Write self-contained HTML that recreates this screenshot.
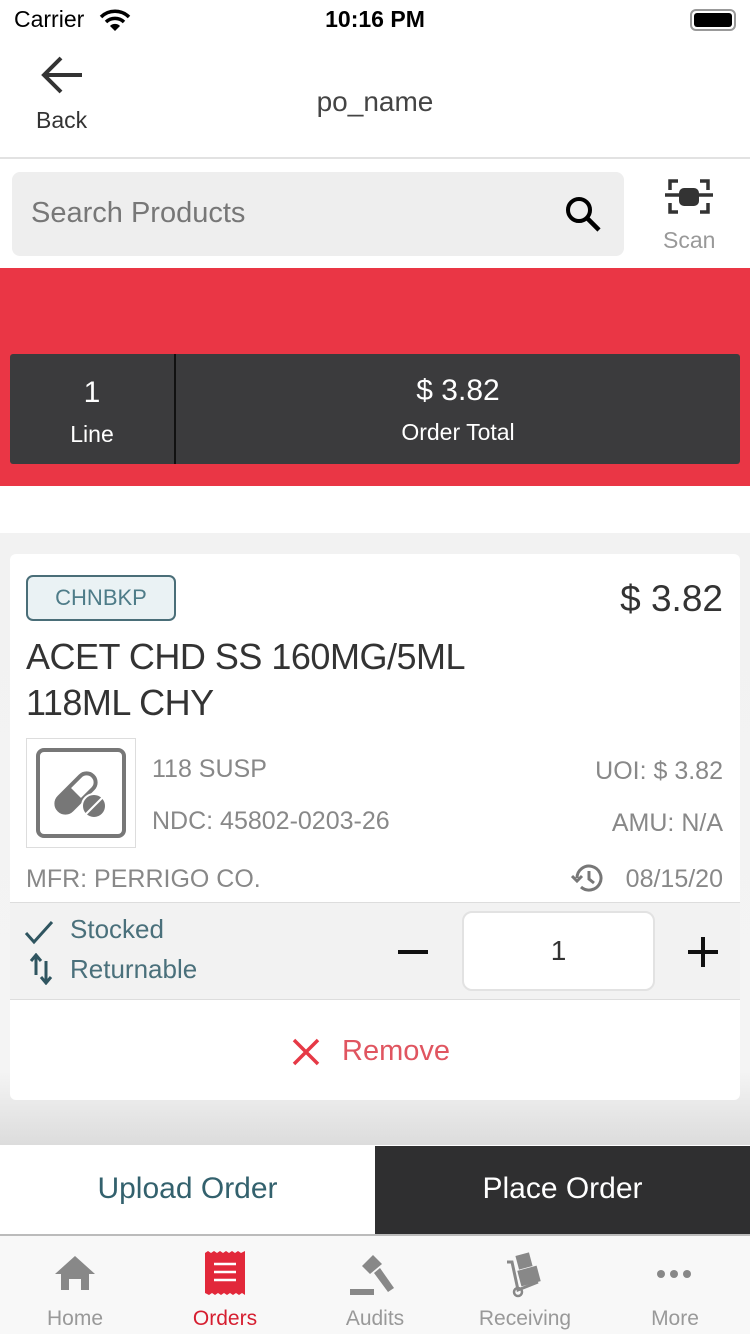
<!DOCTYPE html>
<html><head><meta charset="utf-8"><style>
*{margin:0;padding:0;box-sizing:border-box}
body{width:750px;height:1334px;position:relative;overflow:hidden;background:#fff;font-family:"Liberation Sans",sans-serif}
.a{position:absolute}
.c{white-space:nowrap}
</style></head><body>
<div class="a c" style="left:14px;top:6px;font-size:23px;color:#000">Carrier</div>
<svg class="a" style="left:98px;top:9px" width="34" height="22" viewBox="0 0 34 22"><path d="M3 8 A20 20 0 0 1 31 8" stroke="#000" stroke-width="3.5" fill="none"/><path d="M8 13 A13 13 0 0 1 26 13" stroke="#000" stroke-width="3.5" fill="none"/><path d="M17 22 L12 17 A7 7 0 0 1 22 17Z" fill="#000"/></svg>
<div class="a c" style="left:0;width:750px;text-align:center;top:6px;font-size:23px;font-weight:bold;color:#000">10:16 PM</div>
<div class="a" style="left:690px;top:9px;width:46px;height:22px;border:2px solid #999;border-radius:6px;padding:2px"><div style="background:#000;width:100%;height:100%;border-radius:3px"></div></div>

<svg class="a" style="left:40px;top:55px" width="44" height="40" viewBox="0 0 44 40"><path d="M42 20H4M21 3L4 20L21 37" stroke="#333" stroke-width="4" fill="none"/></svg>
<div class="a c" style="left:36px;top:107px;font-size:23px;color:#333">Back</div>
<div class="a c" style="left:0;width:750px;text-align:center;top:86px;font-size:28px;color:#444">po_name</div>
<div class="a" style="left:0;top:157px;width:750px;height:2px;background:#e2e2e2"></div>

<div class="a" style="left:12px;top:172px;width:612px;height:84px;background:#eeeeee;border-radius:8px"></div>
<div class="a c" style="left:31px;top:197px;font-size:29px;color:#777">Search Products</div>
<svg class="a" style="left:564px;top:195px" width="40" height="40" viewBox="0 0 40 40"><circle cx="15" cy="15" r="11" stroke="#000" stroke-width="4" fill="none"/><path d="M23 23L35 35" stroke="#000" stroke-width="4.5"/></svg>
<svg class="a" style="left:664px;top:176px" width="50" height="40" viewBox="0 0 50 40"><path d="M6 14V5H14M36 5H44V14M6 27V36H14M36 36H44V27" stroke="#333" stroke-width="3.5" fill="none"/><path d="M1 19H49" stroke="#333" stroke-width="3.5"/><rect x="15" y="12" width="20" height="18" rx="5" fill="#333"/></svg>
<div class="a c" style="left:663px;top:227px;font-size:23px;color:#999">Scan</div>

<div class="a" style="left:0;top:268px;width:750px;height:218px;background:#ea3645"></div>
<div class="a" style="left:10px;top:354px;width:730px;height:110px;background:#3b3b3d;border-radius:3px"></div>
<div class="a" style="left:174px;top:354px;width:2px;height:110px;background:#111"></div>
<div class="a c" style="left:10px;width:164px;text-align:center;top:376px;font-size:30px;color:#fff">1</div>
<div class="a c" style="left:10px;width:164px;text-align:center;top:421px;font-size:23px;color:#fff">Line</div>
<div class="a c" style="left:176px;width:564px;text-align:center;top:374px;font-size:30px;color:#fff">$ 3.82</div>
<div class="a c" style="left:176px;width:564px;text-align:center;top:419px;font-size:23px;color:#fff">Order Total</div>

<div class="a" style="left:0;top:533px;width:750px;height:612px;background:linear-gradient(180deg,#f2f2f2,#f4f4f4 88%,#dcdcdc)"></div>
<div class="a" style="left:10px;top:554px;width:730px;height:546px;background:#fff;border-radius:6px"></div>
<div class="a c" style="left:26px;top:575px;width:150px;height:46px;border:2px solid #4a6e78;border-radius:7px;background:#eaf2f4;color:#4e7c88;font-size:22px;text-align:center;line-height:42px">CHNBKP</div>
<div class="a c" style="right:27px;top:578px;font-size:37px;color:#333">$ 3.82</div>
<div class="a" style="left:26px;top:634px;font-size:36px;line-height:46px;color:#333;letter-spacing:-0.5px">ACET CHD SS 160MG/5ML<br>118ML CHY</div>
<div class="a" style="left:26px;top:738px;width:110px;height:110px;border:1px solid #ddd"></div>
<svg class="a" style="left:36px;top:748px" width="90" height="90" viewBox="0 0 90 90"><rect x="2" y="2" width="86" height="86" rx="6" stroke="#777" stroke-width="4" fill="none"/><g transform="rotate(-45 40 45)"><rect x="16" y="36" width="48" height="18" rx="9" stroke="#777" stroke-width="4" fill="none"/><path d="M25 36H40V54H25A9 9 0 0 1 25 36Z" fill="#777"/></g><circle cx="58" cy="58" r="12" fill="#777" stroke="#fff" stroke-width="2"/><path d="M50 66L66 50" stroke="#fff" stroke-width="2"/></svg>
<div class="a c" style="left:152px;top:755px;font-size:25px;color:#888">118 SUSP</div>
<div class="a c" style="left:152px;top:807px;font-size:25px;color:#888">NDC: 45802-0203-26</div>
<div class="a c" style="right:27px;top:757px;font-size:25px;color:#888">UOI: $ 3.82</div>
<div class="a c" style="right:27px;top:809px;font-size:25px;color:#888">AMU: N/A</div>
<div class="a c" style="left:26px;top:865px;font-size:25px;color:#888">MFR: PERRIGO CO.</div>
<svg class="a" style="left:571px;top:863px" width="32" height="30" viewBox="0 0 32 30"><path d="M6 15A12 12 0 1 1 10 24" stroke="#777" stroke-width="3" fill="none"/><path d="M1 13L6 18L11 13" stroke="#777" stroke-width="3" fill="none"/><path d="M18 8V16L23 20" stroke="#777" stroke-width="3" fill="none"/></svg>
<div class="a c" style="right:27px;top:865px;font-size:25px;color:#888">08/15/20</div>

<div class="a" style="left:10px;top:902px;width:730px;height:98px;background:#f2f2f2;border-top:1px solid #ddd;border-bottom:1px solid #ddd"></div>
<svg class="a" style="left:24px;top:918px" width="30" height="28" viewBox="0 0 30 28"><path d="M2 15L10 24L28 4" stroke="#2f5560" stroke-width="3" fill="none"/></svg>
<div class="a c" style="left:70px;top:914px;font-size:26px;color:#4a707b">Stocked</div>
<svg class="a" style="left:28px;top:953px" width="26" height="32" viewBox="0 0 26 32"><path d="M8 22V3M3 8L8 2L13 8M18 8V29M13 24L18 30L23 24" stroke="#2f5560" stroke-width="3" fill="none"/></svg>
<div class="a c" style="left:70px;top:954px;font-size:26px;color:#4a707b">Returnable</div>
<div class="a" style="left:398px;top:950px;width:30px;height:4px;background:#111"></div>
<div class="a" style="left:462px;top:911px;width:193px;height:80px;background:#fff;border:2px solid #e2e2e2;border-radius:10px;text-align:center;line-height:76px;font-size:28px;color:#333">1</div>
<div class="a" style="left:688px;top:950px;width:30px;height:4px;background:#111"></div>
<div class="a" style="left:701px;top:937px;width:4px;height:30px;background:#111"></div>

<svg class="a" style="left:291px;top:1037px" width="30" height="30" viewBox="0 0 30 30"><path d="M3 3L27 27M27 3L3 27" stroke="#e63946" stroke-width="3.5"/></svg>
<div class="a c" style="left:342px;top:1035px;font-size:29px;color:#e05560">Remove</div>

<div class="a" style="left:0;top:1146px;width:375px;height:88px;background:#fff"></div>
<div class="a c" style="left:0;width:375px;text-align:center;top:1172px;font-size:30px;color:#33616d">Upload Order</div>
<div class="a" style="left:375px;top:1146px;width:375px;height:88px;background:#2f2f30"></div>
<div class="a c" style="left:375px;width:375px;text-align:center;top:1172px;font-size:30px;color:#fff">Place Order</div>
<div class="a" style="left:0;top:1234px;width:750px;height:100px;background:#f8f8f8;border-top:2px solid #bbb"></div>

<svg class="a" style="left:54px;top:1255px" width="42" height="36" viewBox="0 0 42 36"><path d="M21 1L41 19H35V35H27V24H15V35H7V19H1Z" fill="#888"/></svg>
<div class="a c" style="left:0;width:150px;text-align:center;top:1307px;font-size:21px;color:#999">Home</div>
<svg class="a" style="left:204px;top:1251px" width="42" height="44" viewBox="0 0 42 44"><path d="M1 2L4 0L7 2L10 0L13 2L16 0L19 2L22 0L25 2L28 0L31 2L34 0L37 2L41 0V44L38 42L35 44L32 42L29 44L26 42L23 44L20 42L17 44L14 42L11 44L8 42L5 44L1 42Z" fill="#e2283a"/><path d="M10 13H32M10 21H32M10 29H32" stroke="#fff" stroke-width="2.5"/></svg>
<div class="a c" style="left:150px;width:150px;text-align:center;top:1307px;font-size:21px;color:#d61e30">Orders</div>
<svg class="a" style="left:348px;top:1252px" width="48" height="46" viewBox="0 0 48 46"><path d="M25 3L34 12L22 22L14 14Z" fill="#888"/><path d="M26 21L32 16L46 36L40 40Z" fill="#888"/><rect x="2" y="37" width="24" height="6" fill="#888"/></svg>
<div class="a c" style="left:300px;width:150px;text-align:center;top:1307px;font-size:21px;color:#999">Audits</div>
<svg class="a" style="left:504px;top:1252px" width="42" height="46" viewBox="0 0 42 46"><path d="M3 10L8 10L14 38L34 30" stroke="#888" stroke-width="3" fill="none"/><circle cx="14" cy="40" r="4" fill="none" stroke="#888" stroke-width="2.5"/><rect x="13" y="2" width="14" height="14" fill="#888" transform="rotate(-15 20 9)"/><rect x="15" y="16" width="20" height="16" fill="#888" transform="rotate(-15 25 24)"/></svg>
<div class="a c" style="left:450px;width:150px;text-align:center;top:1307px;font-size:21px;color:#999">Receiving</div>
<svg class="a" style="left:656px;top:1268px" width="36" height="12" viewBox="0 0 36 12"><circle cx="5" cy="6" r="4" fill="#888"/><circle cx="18" cy="6" r="4" fill="#888"/><circle cx="31" cy="6" r="4" fill="#888"/></svg>
<div class="a c" style="left:600px;width:150px;text-align:center;top:1307px;font-size:21px;color:#999">More</div>
</body></html>
